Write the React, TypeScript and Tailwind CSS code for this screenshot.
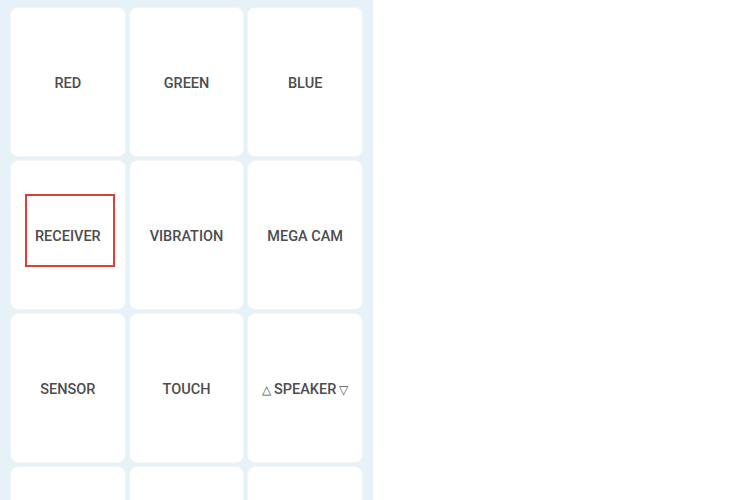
import React from "react";

const items: React.ReactNode[] = [
  "RED",
  "GREEN",
  "BLUE",
  "RECEIVER",
  "VIBRATION",
  "MEGA CAM",
  "SENSOR",
  "TOUCH",
  <>
    <span className="text-[12px] mr-[3px]">△</span>SPEAKER
    <span className="text-[12px] ml-[3px]">▽</span>
  </>,
  "",
  "",
  "",
];

export default function App() {
  return (
    <div
      className="flex w-[750px] h-[500px] overflow-hidden bg-white"
      style={{ fontFamily: "Roboto, 'Noto Sans', sans-serif" }}
    >
      <div className="w-[373px] h-[500px] shrink-0 bg-[#e6f2f7] pl-[10px] pr-[10px] pt-[7px] overflow-hidden">
        <div className="grid grid-cols-3 gap-x-[3px] gap-y-[3px] auto-rows-[150px]">
          {items.map((label, i) => (
            <div
              key={i}
              className="relative flex items-center justify-center pt-[3px] rounded-[8px] bg-white border border-[#f1f6f8]"
            >
              <span className="flex items-center text-[14.5px] font-medium text-[#4d4d4d]">
                {label}
              </span>
              {i === 3 && (
                <div className="absolute left-[14px] top-[33px] w-[90px] h-[73px] border-[2.5px] border-[#d8403b]" />
              )}
            </div>
          ))}
        </div>
      </div>
      <div className="flex-1" />
    </div>
  );
}
